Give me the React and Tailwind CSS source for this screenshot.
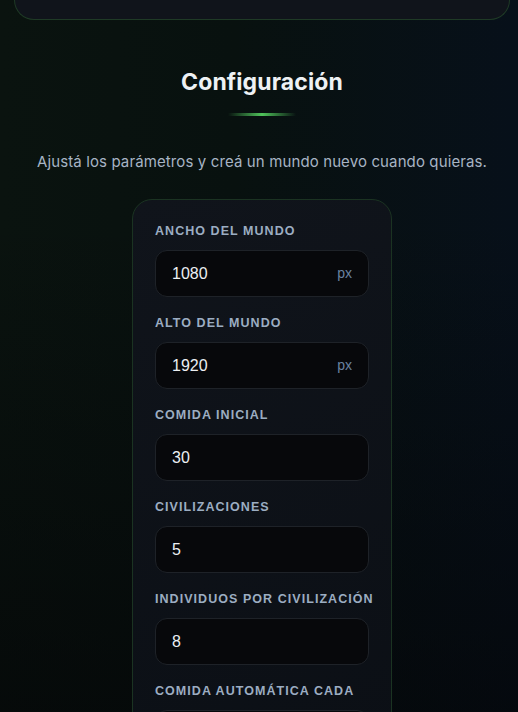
import React from "react";

const fields = [
  { label: "Ancho del mundo", value: "1080", unit: "px" },
  { label: "Alto del mundo", value: "1920", unit: "px" },
  { label: "Comida inicial", value: "30" },
  { label: "Civilizaciones", value: "5" },
  { label: "Individuos por civilización", value: "8" },
  { label: "Comida automática cada", value: "2" },
];

export default function App() {
  return (
    <div className="min-h-[712px] h-[712px] overflow-hidden bg-[linear-gradient(90deg,#0a130f_0%,#08110f_45%,#07101a_100%)] font-['Inter',sans-serif]">
      <div className="h-full bg-[linear-gradient(180deg,rgba(0,0,0,0)_0%,rgba(0,0,0,0)_30%,rgba(3,4,6,0.6)_100%)]">
        <div className="ml-[14px] mr-[8px] flex flex-col">
          <div className="h-[20px] rounded-b-[20px] border border-t-0 border-[#1f3a26] bg-[#10141b]" />
          <div className="flex flex-col items-center">
            <h2 className="mt-[48px] text-[23px] leading-[28px] font-bold text-[#eef1f4] tracking-[0.1px]">
              Configuración
            </h2>
            <div className="mt-[17px] h-[3px] w-[68px] bg-[linear-gradient(90deg,rgba(74,190,84,0)_0%,#4fc35a_50%,rgba(74,190,84,0)_100%)]" />
            <p className="mt-[35px] text-[15px] leading-[22px] text-[#a7b4c4] tracking-[0.12px] whitespace-nowrap">
              Ajustá los parámetros y creá un mundo nuevo cuando quieras.
            </p>
            <div className="mt-[26px] w-[260px] rounded-[20px] border border-[#1b3322] bg-[linear-gradient(160deg,#10141b_0%,#0b0f15_100%)] px-[22px] pt-[23px] pb-6 flex flex-col gap-[18px]">
              {fields.map((f) => (
                <div key={f.label} className="flex flex-col">
                  <label className="h-4 leading-4 text-[12.5px] font-bold uppercase tracking-[1.05px] text-[#9cadc2] font-['Liberation_Sans',Arial,sans-serif] whitespace-nowrap">
                    {f.label}
                  </label>
                  <div className="mt-[11px] h-[47px] rounded-[12px] border border-[#1e2228] bg-[#07080b] flex items-center px-4">
                    <span className="flex-1 text-[16px] text-[#eceff3] font-['Liberation_Sans',Arial,sans-serif]">
                      {f.value}
                    </span>
                    {f.unit && (
                      <span className="text-[14px] text-[#6a82a0] font-['Liberation_Sans',Arial,sans-serif]">
                        {f.unit}
                      </span>
                    )}
                  </div>
                </div>
              ))}
            </div>
          </div>
        </div>
      </div>
    </div>
  );
}
